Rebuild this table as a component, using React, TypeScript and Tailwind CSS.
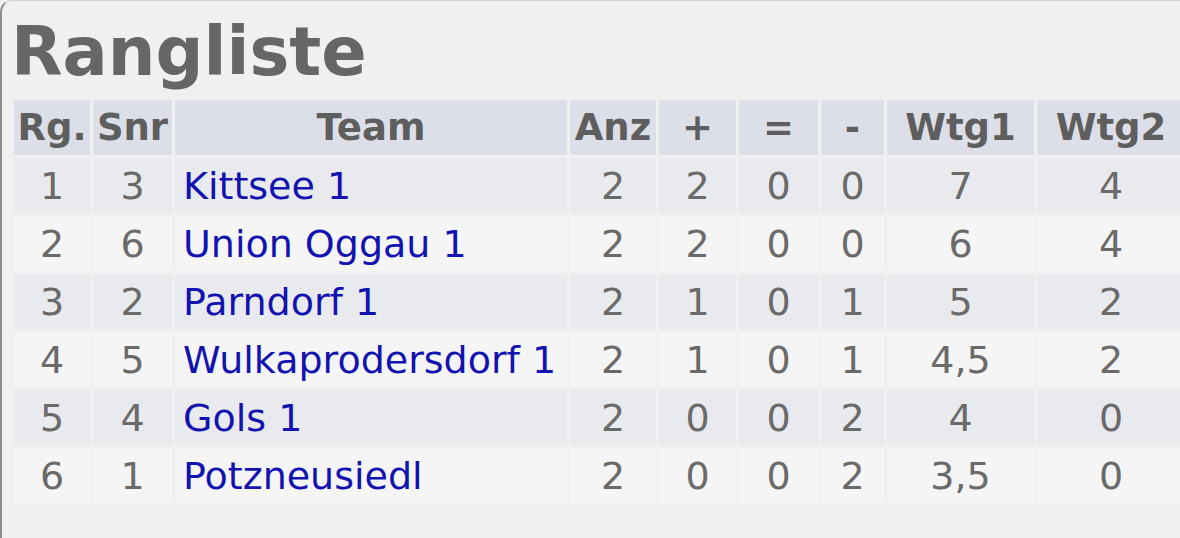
import React from 'react';

type Row = {
  rg: number;
  snr: number;
  team: string;
  anz: string;
  plus: string;
  draw: string;
  minus: string;
  wtg1: string;
  wtg2: string;
};

const rows: Row[] = [
  { rg: 1, snr: 3, team: 'Kittsee 1', anz: '2', plus: '2', draw: '0', minus: '0', wtg1: '7', wtg2: '4' },
  { rg: 2, snr: 6, team: 'Union Oggau 1', anz: '2', plus: '2', draw: '0', minus: '0', wtg1: '6', wtg2: '4' },
  { rg: 3, snr: 2, team: 'Parndorf 1', anz: '2', plus: '1', draw: '0', minus: '1', wtg1: '5', wtg2: '2' },
  { rg: 4, snr: 5, team: 'Wulkaprodersdorf 1', anz: '2', plus: '1', draw: '0', minus: '1', wtg1: '4,5', wtg2: '2' },
  { rg: 5, snr: 4, team: 'Gols 1', anz: '2', plus: '0', draw: '0', minus: '2', wtg1: '4', wtg2: '0' },
  { rg: 6, snr: 1, team: 'Potzneusiedl', anz: '2', plus: '0', draw: '0', minus: '2', wtg1: '3,5', wtg2: '0' },
];

// header cells: label + fixed width
const columns = [
  { label: 'Rg.', w: 'w-[76px]' },
  { label: 'Snr', w: 'w-[79px]' },
  { label: 'Team', w: 'w-[392px]' },
  { label: 'Anz', w: 'w-[86px]' },
  { label: '+', w: 'w-[77px]' },
  { label: '=', w: 'w-[79px]' },
  { label: '-', w: 'w-[63px]' },
  { label: 'Wtg1', w: 'w-[147px]' },
  { label: 'Wtg2', w: 'w-[148px]' },
];

const App: React.FC = () => {
  return (
    <div className="h-[538px] w-[1180px] overflow-hidden bg-[#f0f0f0] font-['DejaVu_Sans',Verdana,sans-serif]">
      <div className="h-full border-l-2 border-t border-l-[#8c8c8c] border-t-[#d2d2d2] rounded-tl-[12px] pt-[18px]">
        <h1 className="pl-[9px] text-[67px] font-bold leading-none text-[#666666]">Rangliste</h1>

        <table className="mt-[11px] ml-[9px] w-[1177px] table-fixed border-separate border-spacing-[3px] text-[38px] text-[#6a6a6a]">
          <thead>
            <tr>
              {columns.map((c) => (
                <th
                  key={c.label}
                  className={`${c.w} h-[55px] p-0 bg-[#dddfe8] text-center text-[37px] font-bold leading-none text-[#5e5e5e]`}
                >
                  {c.label}
                </th>
              ))}
            </tr>
          </thead>
          <tbody>
            {rows.map((r, i) => {
              const bg = i % 2 === 0 ? 'bg-[#e9eaee]' : 'bg-[#f5f5f5]';
              return (
                <tr key={r.rg}>
                  <td className={`${bg} h-[55px] p-0 text-center leading-none`}>{r.rg}</td>
                  <td className={`${bg} h-[55px] p-0 text-center leading-none`}>{r.snr}</td>
                  <td className={`${bg} h-[55px] p-0 pl-[8px] text-left leading-none`}>
                    <a href="#" className="text-[#1212b0] no-underline">
                      {r.team}
                    </a>
                  </td>
                  <td className={`${bg} h-[55px] p-0 text-center leading-none`}>{r.anz}</td>
                  <td className={`${bg} h-[55px] p-0 text-center leading-none`}>{r.plus}</td>
                  <td className={`${bg} h-[55px] p-0 text-center leading-none`}>{r.draw}</td>
                  <td className={`${bg} h-[55px] p-0 text-center leading-none`}>{r.minus}</td>
                  <td className={`${bg} h-[55px] p-0 text-center leading-none`}>{r.wtg1}</td>
                  <td className={`${bg} h-[55px] p-0 text-center leading-none`}>{r.wtg2}</td>
                </tr>
              );
            })}
          </tbody>
        </table>
      </div>
    </div>
  );
};

export default App;
